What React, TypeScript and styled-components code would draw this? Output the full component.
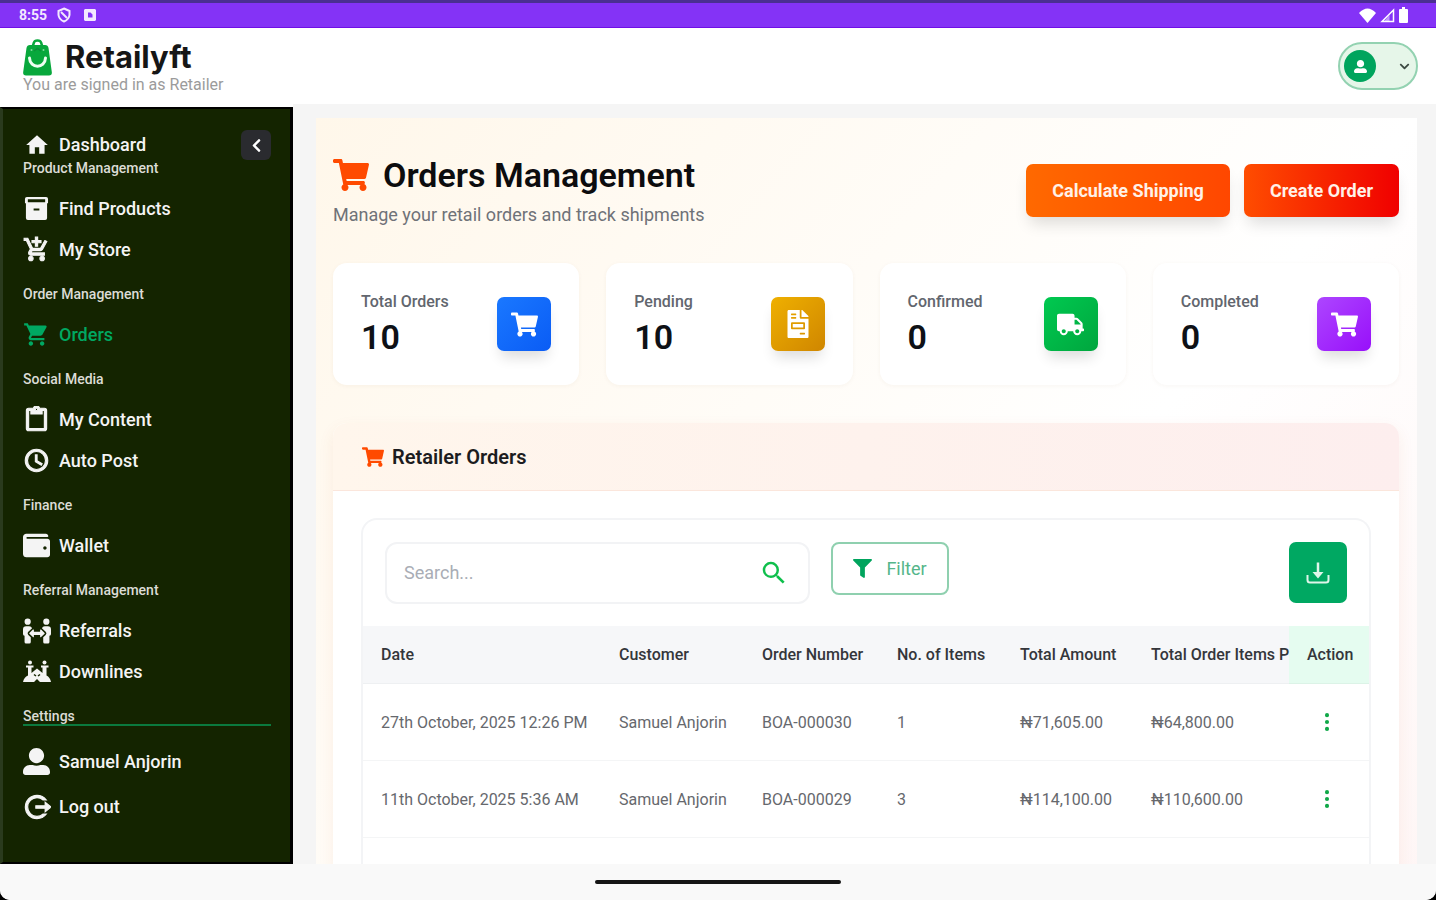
import React from "react";
import styled, { createGlobalStyle } from "styled-components";
import {
  MdHome,
  MdAddShoppingCart,
  MdShoppingCart,
  MdContentPaste,
  MdAccessTime,
  MdSearch,
} from "react-icons/md";
import {
  FaWallet,
  FaPeopleArrows,
  FaUserAlt,
  FaShoppingCart,
  FaFileInvoice,
  FaTruck,
  FaFilter,
  FaChevronDown,
  FaChevronLeft,
} from "react-icons/fa";
import { RiLogoutCircleRLine } from "react-icons/ri";
import { BsThreeDotsVertical } from "react-icons/bs";

const GlobalStyle = createGlobalStyle`
  *, *::before, *::after { box-sizing: border-box; }
  body {
    margin: 0;
    background: #000;
    color: #101828;
    font-family: Roboto, "Liberation Sans", sans-serif;
    font-size: 16px;
  }
  h1, h2, h3, p, ul { margin: 0; padding: 0; }
  ul { list-style: none; }
  a { color: inherit; text-decoration: none; }
  button { font-family: inherit; cursor: pointer; }
  svg { display: block; flex: none; }
`;

const Screen = styled.div`
  display: flex;
  flex-direction: column;
  height: 100vh;
  overflow: hidden;
  background: #f9f9f9;
  border-radius: 0 0 10px 10px;
`;

/* Device bars */

const StatusBar = styled.div`
  flex: none;
  display: flex;
  align-items: center;
  justify-content: space-between;
  height: 28px;
  padding: 0 28px 0 19px;
  background: #8433f6;
  border-top: 3px solid #4b2f92;
  border-bottom: 1px solid #6f0fe6;
  color: #f3e9ff;
`;

const StatusGroup = styled.div<{ $gap: number }>`
  display: flex;
  align-items: center;
  gap: ${(p) => p.$gap}px;
`;

const Clock = styled.span`
  width: 30px;
  font-size: 14px;
  font-weight: 700;
  line-height: 16px;
`;

const HomeBar = styled.div`
  flex: none;
  display: flex;
  align-items: center;
  justify-content: center;
  height: 36px;
  background: #f9f9f9;
`;

const HomeHandle = styled.div`
  width: 246px;
  height: 4px;
  border-radius: 2px;
  background: #151515;
`;

/* App header */

const Header = styled.header`
  flex: none;
  display: flex;
  align-items: center;
  justify-content: space-between;
  height: 76px;
  padding: 0 18px 0 23px;
  background: #fff;
`;

const Brand = styled.div`
  display: flex;
  flex-direction: column;
`;

const BrandRow = styled.a`
  display: flex;
  align-items: center;
  gap: 13px;
  height: 38px;
`;

const BrandName = styled.span`
  font-family: Inter, Roboto, sans-serif;
  font-size: 31px;
  font-weight: 700;
  line-height: 36px;
  color: #161616;
`;

const SignedIn = styled.p`
  font-size: 16px;
  line-height: 18px;
  color: #9b9b9b;
`;

const ProfileButton = styled.button`
  display: flex;
  align-items: center;
  justify-content: space-between;
  width: 80px;
  height: 48px;
  padding: 0 6px 0 4px;
  border: 2px solid #93d2b1;
  border-radius: 24px;
  background: #e6f6e9;
  color: #3d4a42;
`;

const Avatar = styled.span`
  display: flex;
  align-items: center;
  justify-content: center;
  width: 32px;
  height: 32px;
  border-radius: 50%;
  background: #00a45d;
  color: #fff;
`;

/* Sidebar */

const Body = styled.div`
  flex: 1;
  display: flex;
  min-height: 0;
  background: #f5f5f5;
`;

const Sidebar = styled.aside`
  flex: none;
  width: 293px;
  padding: 21px 19px 0 20px;
  border: solid #000;
  border-width: 2px 3px 2px 0;
  box-shadow: 0 -3px 0 #fff;
  border-left: 3px solid #2a3a1d;
  margin-top: 3px;
  background: #142400;
  color: #f4f4f4;
`;

const SideTop = styled.div`
  display: flex;
  align-items: center;
  justify-content: space-between;
  height: 30px;
`;

const CollapseButton = styled.button`
  display: flex;
  align-items: center;
  justify-content: center;
  width: 30px;
  height: 30px;
  padding: 0;
  border: 0;
  border-radius: 6px;
  background: #2a2b2f;
  color: #fff;
`;

const SectionTitle = styled.h3<{ $first?: boolean; $ruled?: boolean }>`
  padding-top: ${(p) => (p.$first ? 0 : 16)}px;
  margin-bottom: ${(p) => (p.$ruled ? 13 : 12)}px;
  border-bottom: ${(p) => (p.$ruled ? "2px solid #0b7a3e" : "0")};
  font-size: 14px;
  font-weight: 500;
  line-height: 16px;
  color: #dcdcd6;
`;

const NavLink = styled.a<{ $active?: boolean; $tall?: boolean }>`
  display: flex;
  align-items: center;
  gap: 9px;
  height: ${(p) => (p.$tall ? 45 : 41)}px;
  font-size: 18px;
  font-weight: 500;
  line-height: 22px;
  color: ${(p) => (p.$active ? "#00a862" : "#f4f4f4")};
`;

/* The icon sets carry an unpainted bounding path that must not take a stroke. */
const NavIcon = styled.span`
  display: flex;
  align-items: center;
  justify-content: center;
  width: 27px;

  path[fill="none"] { stroke: none; }
`;

/* Main panel */

const Main = styled.main`
  flex: 1;
  min-width: 0;
  padding: 14px 19px 0 23px;
  overflow: hidden;
`;

const Panel = styled.div`
  display: flex;
  flex-direction: column;
  min-height: 170%;
  padding: 38px 18px 0 17px;
  background: linear-gradient(to bottom right, #fff7ea, #ffffff 50%, #fef0ef);
`;

const PageHead = styled.div`
  display: flex;
  align-items: flex-start;
  justify-content: space-between;
`;

const PageTitle = styled.h1`
  display: flex;
  align-items: center;
  gap: 14px;
  font-size: 34px;
  font-weight: 600;
  line-height: 38px;
  color: #0c0c0e;

  svg { color: #ff4a00; }
`;

const PageNote = styled.p`
  margin-top: 10px;
  font-size: 18px;
  line-height: 22px;
  color: #6f7278;
`;

const HeadActions = styled.div`
  display: flex;
  gap: 14px;
  padding-top: 8px;
`;

const ActionButton = styled.button<{ $from: string; $to: string }>`
  height: 53px;
  padding: 0 26px;
  border: 0;
  border-radius: 7px;
  background: linear-gradient(to right, ${(p) => p.$from}, ${(p) => p.$to});
  box-shadow: 0 10px 16px -4px rgba(0, 0, 0, 0.14);
  color: #fff1e8;
  font-size: 18px;
  font-weight: 700;
  line-height: 22px;
`;

const Stats = styled.div`
  display: grid;
  grid-template-columns: repeat(4, 1fr);
  gap: 27px;
  margin-top: 37px;
`;

const StatCard = styled.section`
  display: flex;
  align-items: center;
  justify-content: space-between;
  height: 122px;
  padding: 0 28px;
  border-radius: 14px;
  background: #fff;
  box-shadow: 0 1px 4px rgba(120, 80, 40, 0.05);
`;

const StatLabel = styled.p`
  font-size: 16px;
  font-weight: 500;
  line-height: 20px;
  color: #62666e;
`;

const StatValue = styled.p`
  margin-top: 6px;
  font-size: 34px;
  font-weight: 600;
  line-height: 38px;
  color: #0e1116;
`;

const StatTile = styled.span<{ $from: string; $to: string }>`
  display: flex;
  align-items: center;
  justify-content: center;
  width: 54px;
  height: 54px;
  border-radius: 7px;
  background: linear-gradient(135deg, ${(p) => p.$from}, ${(p) => p.$to});
  box-shadow: 0 10px 14px -4px rgba(0, 0, 0, 0.14);
  color: #fff;
`;

const OrdersCard = styled.section`
  flex: 1;
  display: flex;
  flex-direction: column;
  margin-top: 38px;
  border-radius: 14px 14px 0 0;
  background: #fff;
  box-shadow: 0 6px 16px rgba(200, 90, 40, 0.08);
`;

const CardTitle = styled.h2`
  display: flex;
  align-items: center;
  gap: 8px;
  height: 68px;
  padding: 0 29px;
  border-bottom: 1px solid #fbe6dc;
  border-radius: 14px 14px 0 0;
  background: linear-gradient(to right, #fff6ec, #fdeeee);
  font-size: 20px;
  font-weight: 600;
  line-height: 24px;
  color: #1c1c20;

  svg { color: #ff4a00; }
`;

const TableBox = styled.div`
  flex: 1;
  margin: 27px 28px 0;
  border: 2px solid #f3f4f6;
  border-bottom: 0;
  border-radius: 16px 16px 0 0;
`;

const Toolbar = styled.div`
  display: flex;
  align-items: flex-start;
  padding: 22px;
`;

const SearchField = styled.label`
  display: flex;
  align-items: center;
  width: 42%;
  min-width: 425px;
  height: 62px;
  padding: 0 19px 0 17px;
  border: 2px solid #f2f3f5;
  border-radius: 12px;
  color: #0fbf4c;
`;

const SearchInput = styled.input`
  flex: 1;
  min-width: 0;
  padding: 0;
  border: 0;
  outline: 0;
  background: transparent;
  font-family: inherit;
  font-size: 18px;
  line-height: 22px;
  color: #333;

  &::placeholder { color: #a9adb5; opacity: 1; }
`;

const FilterButton = styled.button`
  display: flex;
  align-items: center;
  justify-content: center;
  gap: 14px;
  width: 118px;
  height: 53px;
  margin-left: 21px;
  padding: 0;
  border: 2px solid #8fd0af;
  border-radius: 8px;
  background: #fff;
  font-size: 18px;
  line-height: 22px;
  color: #55b68a;

  svg { color: #00a45d; }
`;

const DownloadButton = styled.button`
  display: flex;
  align-items: center;
  justify-content: center;
  width: 58px;
  height: 61px;
  margin-left: auto;
  padding: 0;
  border: 0;
  border-radius: 7px;
  background: #00a862;
  color: #dff6ea;
`;

const TableScroll = styled.div`
  overflow-x: auto;
  scrollbar-width: none;
`;

const Table = styled.table`
  width: 100%;
  min-width: 1006px;
  table-layout: fixed;
  border-collapse: separate;
  border-spacing: 0;
  text-align: left;
  white-space: nowrap;
`;

const HeadCell = styled.th`
  height: 58px;
  padding: 0 0 0 18px;
  border-bottom: 1px solid #eef0f2;
  background: #f6f7f9;
  font-size: 16px;
  font-weight: 500;
  color: #34363b;
`;

const ActionHead = styled(HeadCell)`
  border-bottom-color: #dcf3e7;
  background: #e5fcf0;
`;

const Cell = styled.td`
  height: 77px;
  padding: 0 0 0 18px;
  border-bottom: 1px solid #f4f5f6;
  background: #fff;
  font-size: 16px;
  color: #66686d;
`;

const RowMenu = styled.button`
  display: flex;
  align-items: center;
  justify-content: center;
  width: 40px;
  height: 40px;
  padding: 0;
  border: 0;
  background: transparent;
  color: #10a848;
`;

/* Drawn icons */

const BagLogo = () => (
  <svg width="29" height="37" viewBox="0 0 29 37" aria-hidden="true">
    <path d="M9.500 8 11 3.500Q11.500 1.500 14.500 1.500T18 3.500L19.500 8" fill="none" stroke="#08a83c" strokeWidth="2.500" />
    <path d="M7 6H22Q25 6 25.500 9L28.800 33Q29.300 36.500 26 36.500H3Q-.3 36.500 .2 33L3.500 9Q4 6 7 6Z" fill="#08a83c" />
    <path d="M11 12 14.500 9.500 18 12" fill="none" stroke="#0c8f38" strokeWidth="1.500" />
    <circle cx="8.500" cy="11" r="1" fill="#7ed79a" />
    <circle cx="20.500" cy="11" r="1" fill="#7ed79a" />
    <path d="M6.500 19C7 30 22 30 22.500 19" fill="none" stroke="#effff2" strokeWidth="3" strokeLinecap="round" />
  </svg>
);

const ArchiveIcon = () => (
  <svg width="25" height="25" viewBox="0 0 26 26" aria-hidden="true">
    <path
      fill="currentColor"
      fillRule="evenodd"
      d="M3 1H23Q25 1 25 3V7.500H24V23Q24 25 22 25H4Q2 25 2 23V7.500H1V3Q1 1 3 1ZM4 3.500V6.500H22V3.500ZM10 13V15H16V13Z"
    />
  </svg>
);

const DownlinesIcon = () => (
  <svg width="28" height="24" viewBox="0 0 28 24" fill="currentColor" aria-hidden="true">
    <circle cx="7" cy="2.500" r="2" />
    <circle cx="21.500" cy="2.500" r="2" />
    <path d="M3 5.500H10.500V7.500H8.500V13L14 8.500 19.500 13V7.500H18V5.500H25.500V7.500H23.500V15.500Q27 17 28 22H17L14 19 11 22H0Q1 17 5 15.500V7.500H3Z" />
    <path d="M11 14.500 13 16M17 14.500 15 16" stroke="#142400" strokeWidth="1.500" />
  </svg>
);

const DownloadIcon = () => (
  <svg width="24" height="24" viewBox="0 0 24 24" fill="none" stroke="currentColor" strokeWidth="2" aria-hidden="true">
    <path d="M12 1.500V12" strokeWidth="2.500" />
    <path d="M6.500 11H17.500L12 17.500Z" fill="currentColor" stroke="none" />
    <path d="M1.500 14V19Q1.500 21.500 4 21.500H20Q22.500 21.500 22.500 19V14" />
  </svg>
);

const ShieldIcon = () => (
  <svg width="14" height="16" viewBox="0 0 14 16" fill="none" stroke="currentColor" strokeWidth="2" aria-hidden="true">
    <path d="M7 1.500 12.500 4V8Q12 12.500 7 14.500 2 12.500 1.500 8V4Z" />
    <path d="M4 5 10 11" />
  </svg>
);

const AppBadgeIcon = () => (
  <svg width="12" height="12" viewBox="0 0 12 12" aria-hidden="true">
    <path fill="currentColor" fillRule="evenodd" d="M1 0H11L12 1V11L11 12H1L0 11V1ZM4 3.500V8.500H8.500V5.500L6.500 3.500Z" />
  </svg>
);

const WifiIcon = () => (
  <svg width="17" height="15" viewBox="0 0 17 15" fill="#fff" aria-hidden="true">
    <path d="M0 5Q8.500-4 17 5L8.500 15Z" />
  </svg>
);

const SignalIcon = () => (
  <svg width="15" height="15" viewBox="0 0 15 15" fill="none" stroke="#fff" strokeWidth="1.500" aria-hidden="true">
    <path d="M13.500 2V13.500H2Z" />
    <path d="M9.500 7V13.500H4Z" fill="#fff" fillOpacity=".5" stroke="none" />
  </svg>
);

const BatteryIcon = () => (
  <svg width="9" height="16" viewBox="0 0 9 16" fill="#fff" aria-hidden="true">
    <path d="M3 0H6V2H8Q9 2 9 3V15Q9 16 8 16H1Q0 16 0 15V3Q0 2 1 2H3Z" />
  </svg>
);

type NavEntry = { label: string; icon: React.ReactNode; active?: boolean };
type NavSection = { title: string; items: NavEntry[]; ruled?: boolean };

const sections: NavSection[] = [
  {
    title: "Product Management",
    items: [
      { label: "Find Products", icon: <ArchiveIcon /> },
      { label: "My Store", icon: <MdAddShoppingCart size={27} strokeWidth={1} /> },
    ],
  },
  {
    title: "Order Management",
    items: [{ label: "Orders", icon: <MdShoppingCart size={27} />, active: true }],
  },
  {
    title: "Social Media",
    items: [
      { label: "My Content", icon: <MdContentPaste size={27} strokeWidth={1} /> },
      { label: "Auto Post", icon: <MdAccessTime size={27} strokeWidth={1} /> },
    ],
  },
  { title: "Finance", items: [{ label: "Wallet", icon: <FaWallet size={27} /> }] },
  {
    title: "Referral Management",
    items: [
      { label: "Referrals", icon: <FaPeopleArrows size={28} /> },
      { label: "Downlines", icon: <DownlinesIcon /> },
    ],
  },
  {
    title: "Settings",
    ruled: true,
    items: [
      { label: "Samuel Anjorin", icon: <FaUserAlt size={27} /> },
      { label: "Log out", icon: <RiLogoutCircleRLine size={28} strokeWidth={1} /> },
    ],
  },
];

const stats = [
  { label: "Total Orders", value: "10", from: "#1a78ff", to: "#0a5cf5", icon: <FaShoppingCart size={27} /> },
  { label: "Pending", value: "10", from: "#efb000", to: "#cf8600", icon: <FaFileInvoice size={28} /> },
  { label: "Confirmed", value: "0", from: "#00c950", to: "#00a63e", icon: <FaTruck size={27} /> },
  { label: "Completed", value: "0", from: "#ad46ff", to: "#9810fa", icon: <FaShoppingCart size={27} /> },
];

const columns = [
  { label: "Date", width: 238 },
  { label: "Customer", width: 143 },
  { label: "Order Number", width: 135 },
  { label: "No. of Items", width: 123 },
  { label: "Total Amount", width: 131 },
  { label: "Total Order Items P" },
];

const orders = [
  ["27th October, 2025 12:26 PM", "Samuel Anjorin", "BOA-000030", "1", "₦71,605.00", "₦64,800.00"],
  ["11th October, 2025 5:36 AM", "Samuel Anjorin", "BOA-000029", "3", "₦114,100.00", "₦110,600.00"],
];

export default function App() {
  return (
    <Screen>
      <GlobalStyle />
      <StatusBar>
        <StatusGroup $gap={8}>
          <Clock>8:55</Clock>
          <StatusGroup $gap={13}>
            <ShieldIcon />
            <AppBadgeIcon />
          </StatusGroup>
        </StatusGroup>
        <StatusGroup $gap={4}>
          <WifiIcon />
          <SignalIcon />
          <BatteryIcon />
        </StatusGroup>
      </StatusBar>

      <Header>
        <Brand>
          <BrandRow href="#">
            <BagLogo />
            <BrandName>Retailyft</BrandName>
          </BrandRow>
          <SignedIn>You are signed in as Retailer</SignedIn>
        </Brand>
        <ProfileButton aria-label="Account menu">
          <Avatar>
            <FaUserAlt size={13} />
          </Avatar>
          <FaChevronDown size={11} />
        </ProfileButton>
      </Header>

      <Body>
        <Sidebar>
          <SideTop>
            <NavLink href="#">
              <NavIcon>
                <MdHome size={26} />
              </NavIcon>
              Dashboard
            </NavLink>
            <CollapseButton aria-label="Collapse sidebar">
              <FaChevronLeft size={15} />
            </CollapseButton>
          </SideTop>
          <nav>
            {sections.map((section, i) => (
              <React.Fragment key={section.title}>
                <SectionTitle $first={i === 0} $ruled={section.ruled}>
                  {section.title}
                </SectionTitle>
                <ul>
                  {section.items.map((item) => (
                    <li key={item.label}>
                      <NavLink href="#" $active={item.active} $tall={section.ruled}>
                        <NavIcon>{item.icon}</NavIcon>
                        {item.label}
                      </NavLink>
                    </li>
                  ))}
                </ul>
              </React.Fragment>
            ))}
          </nav>
        </Sidebar>

        <Main>
          <Panel>
            <PageHead>
              <div>
                <PageTitle>
                  <FaShoppingCart size={36} />
                  Orders Management
                </PageTitle>
                <PageNote>Manage your retail orders and track shipments</PageNote>
              </div>
              <HeadActions>
                <ActionButton $from="#ff6900" $to="#ff4700">
                  Calculate Shipping
                </ActionButton>
                <ActionButton $from="#ff4d00" $to="#f00000">
                  Create Order
                </ActionButton>
              </HeadActions>
            </PageHead>

            <Stats>
              {stats.map((s) => (
                <StatCard key={s.label}>
                  <div>
                    <StatLabel>{s.label}</StatLabel>
                    <StatValue>{s.value}</StatValue>
                  </div>
                  <StatTile $from={s.from} $to={s.to}>
                    {s.icon}
                  </StatTile>
                </StatCard>
              ))}
            </Stats>

            <OrdersCard>
              <CardTitle>
                <FaShoppingCart size={22} />
                Retailer Orders
              </CardTitle>
              <TableBox>
                <Toolbar>
                  <SearchField>
                    <SearchInput type="text" placeholder="Search..." aria-label="Search orders" />
                    <MdSearch size={30} />
                  </SearchField>
                  <FilterButton>
                    <FaFilter size={19} />
                    Filter
                  </FilterButton>
                  <DownloadButton aria-label="Download orders">
                    <DownloadIcon />
                  </DownloadButton>
                </Toolbar>
                <TableScroll>
                  <Table>
                    <colgroup>
                      {columns.map((c) => (
                        <col key={c.label} width={c.width} />
                      ))}
                      <col width={80} />
                    </colgroup>
                    <thead>
                      <tr>
                        {columns.map((c) => (
                          <HeadCell key={c.label} scope="col">
                            {c.label}
                          </HeadCell>
                        ))}
                        <ActionHead scope="col">Action</ActionHead>
                      </tr>
                    </thead>
                    <tbody>
                      {orders.map((row) => (
                        <tr key={row[2]}>
                          {row.map((value, i) => (
                            <Cell key={columns[i].label}>{value}</Cell>
                          ))}
                          <Cell>
                            <RowMenu aria-label={`Actions for ${row[2]}`}>
                              <BsThreeDotsVertical size={22} />
                            </RowMenu>
                          </Cell>
                        </tr>
                      ))}
                    </tbody>
                  </Table>
                </TableScroll>
              </TableBox>
            </OrdersCard>
          </Panel>
        </Main>
      </Body>

      <HomeBar>
        <HomeHandle />
      </HomeBar>
    </Screen>
  );
}
